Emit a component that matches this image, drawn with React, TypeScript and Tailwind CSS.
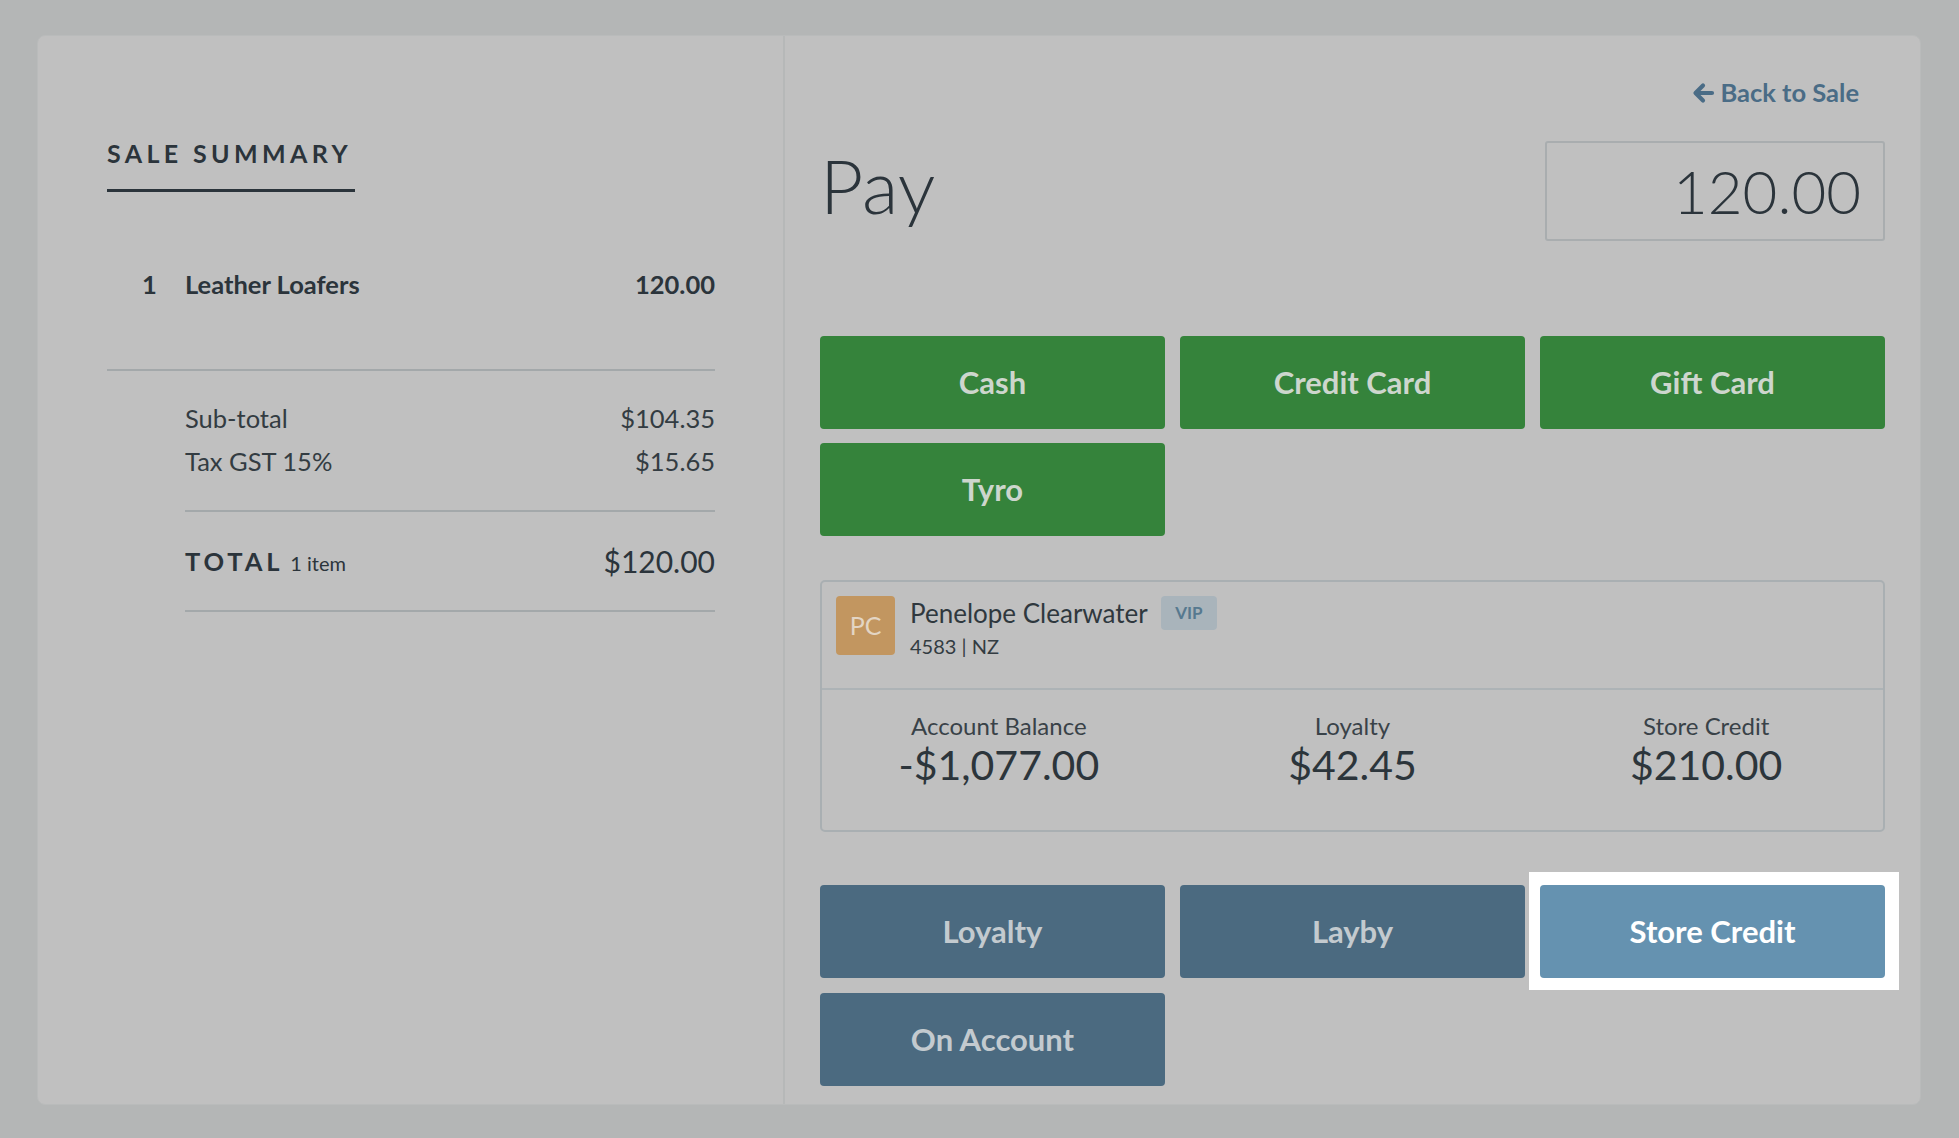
import React from "react";

const font = "font-[Lato,'Noto_Sans',sans-serif]";

function ArrowLeftIcon() {
  return (
    <svg viewBox="0 0 24 24" className="w-[24px] h-[24px]" fill="none" stroke="currentColor" strokeWidth={4.2} strokeLinecap="round" strokeLinejoin="round">
      <path d="M21 12H6" />
      <path d="M12 4.5L4.5 12l7.5 7.5" />
    </svg>
  );
}

function PayButton({ label, tone }: { label: string; tone: "green" | "blue" | "active" }) {
  const colors =
    tone === "green"
      ? "bg-[#35833b] text-[#cdd6cd]"
      : tone === "blue"
        ? "bg-[#4b6a80] text-[#c3cacf]"
        : "bg-[#6592b0] text-white";
  return (
    <button className={`h-[93px] w-full rounded-[4px] text-[31px] font-bold ${colors}`}>
      {label}
    </button>
  );
}

function Stat({ label, value }: { label: string; value: string }) {
  return (
    <div className="flex flex-col items-center">
      <span className="text-[24px] leading-[28px] text-[#394248]">{label}</span>
      <span className="mt-[1px] text-[41px] leading-[48px] text-[#2c353b]">{value}</span>
    </div>
  );
}

export default function App() {
  return (
    <div className={`min-h-screen bg-[#b4b6b6] pt-[35px] pl-[37px] ${font}`}>
      <div className="flex w-[1884px] h-[1070px] rounded-[8px] border border-[#b9bbbb] bg-[#c0c0c0]">
        {/* sale summary */}
        <div className="w-[747px] border-r-2 border-[#b6b8b8] pl-[69px] pr-[68px] pt-[102px] text-[#2b343b]">
          <div className="w-[248px] border-b-[3px] border-[#2b343b] pb-[21px] text-[25px] leading-[30px] font-bold tracking-[0.175em]">
            SALE SUMMARY
          </div>

          <div className="mt-[77px] flex h-[30px] items-center pl-[35px] text-[25.5px] font-bold">
            <span className="w-[43px]">1</span>
            <span className="flex-1">Leather Loafers</span>
            <span>120.00</span>
          </div>

          <div className="mt-[70px] h-[2px] bg-[#a3a8aa]" />

          <div className="mt-[26px] pl-[78px] text-[25.5px] text-[#333c42]">
            <div className="flex h-[43px] items-center justify-between">
              <span>Sub-total</span>
              <span>$104.35</span>
            </div>
            <div className="flex h-[43px] items-center justify-between">
              <span>Tax GST 15%</span>
              <span>$15.65</span>
            </div>
          </div>

          <div className="ml-[78px] mt-[27px] h-[2px] bg-[#a3a8aa]" />

          <div className="ml-[78px] flex h-[98px] items-center justify-between">
            <div className="flex items-baseline gap-[7px]">
              <span className="text-[25.5px] font-bold tracking-[0.15em]">TOTAL</span>
              <span className="text-[20px]">1 item</span>
            </div>
            <span className="text-[30px]">$120.00</span>
          </div>

          <div className="ml-[78px] h-[2px] bg-[#a3a8aa]" />
        </div>

        {/* pay panel */}
        <div className="flex-1 px-[35px] pt-[42px]">
          <div className="flex justify-end pr-[26px]">
            <a className="flex h-[29px] items-center gap-[5px] text-[25.5px] font-bold text-[#4a6c86]">
              <ArrowLeftIcon />
              Back to Sale
            </a>
          </div>

          <div className="mt-[34px] flex items-center justify-between">
            <span className="mb-[12px] text-[75px] leading-[75px] font-light text-[#2b343b]">Pay</span>
            <div className="flex h-[100px] w-[340px] items-center justify-end rounded-[3px] border-2 border-[#a9adaf] pr-[22px] text-[60px] leading-[60px] font-light text-[#2b343b]">
              120.00
            </div>
          </div>

          <div className="mt-[95px] grid grid-cols-3 gap-x-[15px] gap-y-[14px]">
            <PayButton label="Cash" tone="green" />
            <PayButton label="Credit Card" tone="green" />
            <PayButton label="Gift Card" tone="green" />
            <PayButton label="Tyro" tone="green" />
          </div>

          <div className="mt-[44px] rounded-[5px] border-2 border-[#a9afb2]">
            <div className="flex h-[106px] items-start gap-[15px] pl-[14px] pt-[14px]">
              <div className="flex h-[59px] w-[59px] items-center justify-center rounded-[4px] bg-[#c29660] text-[25px] text-[#e3d5c4]">
                PC
              </div>
              <div className="flex flex-col">
                <div className="flex items-center gap-[13px]">
                  <span className="text-[26px] leading-[30px] text-[#2f383e]">Penelope Clearwater</span>
                  <span className="flex h-[34px] w-[56px] items-center justify-center rounded-[4px] bg-[#a9b4bb] text-[17px] font-bold text-[#56798f]">
                    VIP
                  </span>
                </div>
                <span className="mt-[4px] text-[20px] leading-[24px] text-[#333c42]">4583 | NZ</span>
              </div>
            </div>
            <div className="h-[2px] bg-[#adb3b6]" />
            <div className="grid h-[140px] grid-cols-3 pt-[22px]">
              <Stat label="Account Balance" value="-$1,077.00" />
              <Stat label="Loyalty" value="$42.45" />
              <Stat label="Store Credit" value="$210.00" />
            </div>
          </div>

          <div className="mt-[53px] grid grid-cols-3 gap-x-[15px] gap-y-[15px]">
            <PayButton label="Loyalty" tone="blue" />
            <PayButton label="Layby" tone="blue" />
            <div className="relative">
              <div className="absolute -left-[11px] -right-[14px] -top-[13px] -bottom-[12px] bg-white" />
              <div className="relative">
                <PayButton label="Store Credit" tone="active" />
              </div>
            </div>
            <PayButton label="On Account" tone="blue" />
          </div>
        </div>
      </div>
    </div>
  );
}
